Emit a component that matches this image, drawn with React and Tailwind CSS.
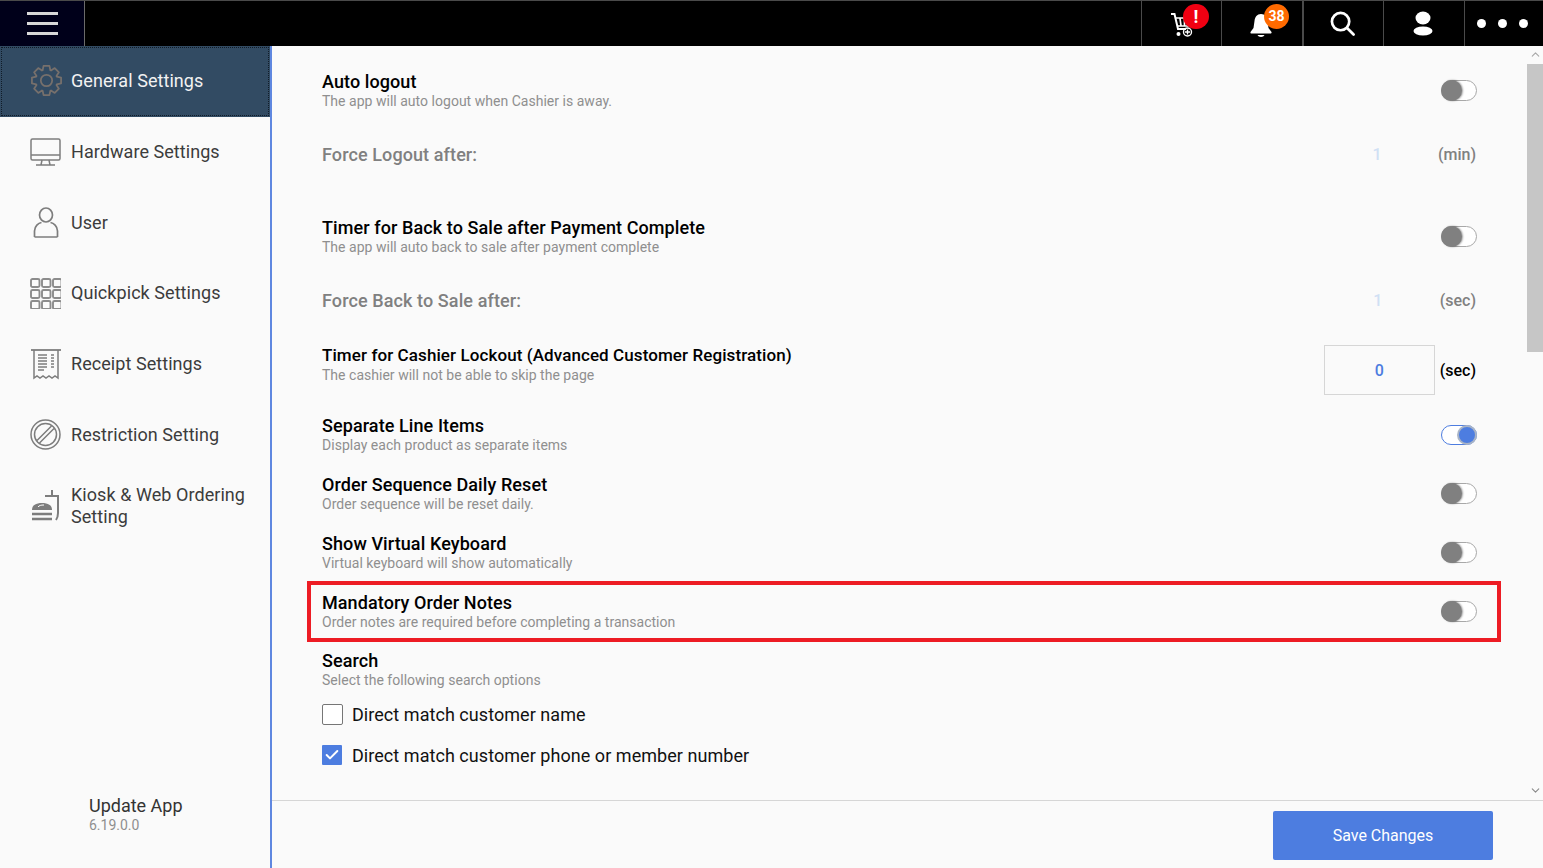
import { ChevronUp, ChevronDown, Check } from 'lucide-react';

const font = { fontFamily: 'Roboto, sans-serif' };

// one outline for the whole cog, teeth computed round the centre
function cogPath() {
  const pts = [];
  for (let i = 0; i < 8; i++) {
    const a = (i * Math.PI) / 4 - Math.PI / 2;
    [[-0.36, 10.6], [-0.2, 14.4], [0.2, 14.4], [0.36, 10.6]].forEach(([da, r]) => {
      pts.push(`${(15 + r * Math.cos(a + da)).toFixed(2)} ${(15 + r * Math.sin(a + da)).toFixed(2)}`);
    });
  }
  return `M${pts.join('L')}Z`;
}

function GearIcon() {
  return (
    <svg width="31" height="31" viewBox="0 0 30 30" fill="none" stroke="#77706c" strokeWidth="1.7" strokeLinejoin="round">
      <path d={cogPath()} />
      <circle cx="15" cy="15" r="5.5" />
    </svg>
  );
}

function MonitorIcon() {
  return (
    <svg width="31" height="28" viewBox="0 0 31 28" fill="none" stroke="#7d7d7d" strokeWidth="1.5">
      <rect x="1" y="1" width="29" height="21" rx="1.5" />
      <path d="M1 17h29M12 22l-1 5M19 22l1 5M6 27h19" />
    </svg>
  );
}

function UserIcon() {
  return (
    <svg width="26" height="31" viewBox="0 0 26 31" fill="none" stroke="#7d7d7d" strokeWidth="1.7">
      <ellipse cx="13" cy="8" rx="6.5" ry="7" />
      <path d="M1.500 30v-6c0-5 4-8 7-8.500M24.500 30v-6c0-5-4-8-7-8.500M1.500 30h23" />
    </svg>
  );
}

function GridIcon() {
  const cells = [];
  for (let r = 0; r < 3; r++) {
    for (let c = 0; c < 3; c++) {
      cells.push(<rect key={`${r}${c}`} x={1 + c * 11} y={1 + r * 11} width="8.500" height="8" rx="1.5" />);
    }
  }
  return (
    <svg width="31" height="31" viewBox="0 0 31 31" fill="none" stroke="#8c8c8c" strokeWidth="1.9">
      {cells}
    </svg>
  );
}

function ReceiptIcon() {
  return (
    <svg width="30" height="31" viewBox="0 0 30 31" fill="none" stroke="#7d7d7d" strokeWidth="1.5">
      <path d="M0 1h30" strokeWidth="1.800" />
      <path d="M3 1v28l3-2 3 2 3-2 3 2 3-2 3 2 3-2 3 2V1" />
      <path d="M7 6h9M7 9h9M7 12h9M7 15h9M7 18h9M7 21h6M20 6h3M20 9h3M20 12h3M20 15h3M20 18h3" strokeWidth="1.500" />
    </svg>
  );
}

function RestrictionIcon() {
  return (
    <svg width="31" height="31" viewBox="0 0 31 31" fill="none" stroke="#7d7d7d" strokeWidth="1.5">
      <circle cx="15.500" cy="15.500" r="14.500" />
      <circle cx="15.500" cy="15.500" r="11" />
      <path d="M7 21.500L21.500 7M9.500 24L24 9.500" />
    </svg>
  );
}

function KioskIcon() {
  return (
    <svg width="29" height="32" viewBox="0 0 29 32" fill="none" stroke="#7d7d7d" strokeWidth="2">
      <path d="M1 20c0-5 4-7 10-7s10 2 10 7z" fill="#7d7d7d" stroke="none" />
      <path d="M7 17c1-1.500 3-2 6-2" stroke="#fff" strokeWidth="1" />
      <path d="M1 24h20M1 29h20" strokeWidth="2.600" />
      <path d="M14 6h14M21 6V0M27 6v17c0 3-.5 5-2 7" />
    </svg>
  );
}

const navItems = [
  { label: 'Hardware Settings', icon: <MonitorIcon />, h: 'h-[70.6px]' },
  { label: 'User', icon: <UserIcon />, h: 'h-[70.6px]' },
  { label: 'Quickpick Settings', icon: <GridIcon />, h: 'h-[70.6px]' },
  { label: 'Receipt Settings', icon: <ReceiptIcon />, h: 'h-[70.6px]' },
  { label: 'Restriction Setting', icon: <RestrictionIcon />, h: 'h-[70.6px]' },
  { label: <>Kiosk &amp; Web Ordering<br />Setting</>, icon: <KioskIcon />, h: 'h-[72.6px]' },
];

function NavIcon({ children }) {
  return <span className="w-[31px] flex justify-center shrink-0">{children}</span>;
}

function Toggle({ on }) {
  if (on) {
    return (
      <div className="w-[36px] h-[20px] rounded-full border border-[#4d7de0] bg-white relative">
        <div className="absolute right-[-1px] top-[-1px] w-[20px] h-[20px] rounded-full bg-[#4d7de0] border-2 border-[#a9b4c6]" />
      </div>
    );
  }
  return (
    <div className="w-[36px] h-[21px] rounded-full border border-[#a8a8a8] bg-white relative">
      <div className="absolute left-[-1px] top-[-1px] w-[21px] h-[21px] rounded-full bg-[#808080] shadow-[1px_0_2px_rgba(0,0,0,0.4)]" />
    </div>
  );
}

function Text({ title, sub, small }) {
  return (
    <div className="flex flex-col mb-[1px]">
      <div className={`${small ? 'text-[17px]' : 'text-[18px]'} leading-[21px] font-medium text-black tracking-[0.09px]`}>{title}</div>
      <div className="text-[14px] leading-[18px] text-[#8f8f8f] tracking-[0.02px]">{sub}</div>
    </div>
  );
}

function Row({ title, sub, children }) {
  return (
    <div className="h-[59px] flex items-center justify-between">
      <Text title={title} sub={sub} />
      {children}
    </div>
  );
}

function Topbar() {
  return (
    <div className="h-[46px] flex bg-black border-t border-[#4a4a4a] shrink-0">
      <div className="w-[85px] bg-[#00001a] border-r border-[#6a6a6a] flex flex-col items-center justify-center gap-[7px]">
        <div className="w-[31px] h-[3px] bg-[#d8d8d8]" />
        <div className="w-[31px] h-[3px] bg-[#d8d8d8]" />
        <div className="w-[31px] h-[3px] bg-[#d8d8d8]" />
      </div>
      <div className="flex-1" />
      <div className="w-[80px] border-l border-[#4a4a4a] relative flex items-center justify-center">
        <svg width="22" height="25" viewBox="0 0 22 25" fill="none" stroke="#fff" strokeWidth="2" className="mr-[-1px] mt-[4px]">
          <path d="M0 1h3.500l3.500 15h8" />
          <path d="M4.500 5H19l-2 8H6.500M9 5.500l1 7M13.500 5.500l0 7" strokeWidth="1.700" />
          <circle cx="7.500" cy="21" r="2" fill="#fff" stroke="none" />
          <circle cx="16.500" cy="19" r="4" strokeWidth="1.400" />
          <path d="M16.500 16.500v5M14 19h5" strokeWidth="1.400" />
        </svg>
        <div className="absolute left-[41px] top-[3px] w-[26px] h-[25px] rounded-full bg-[#f00012] text-white text-[18px] font-bold leading-[25px] text-center">!</div>
      </div>
      <div className="w-[81px] border-l border-[#4a4a4a] relative flex items-center justify-center">
        <svg width="22" height="25" viewBox="0 0 22 25" fill="#fff" className="mr-[3px] mt-[3px]">
          <path d="M11 1c4 0 6 3 6.500 7l1 7 3 4c.3 1-.3 1.500-1 1.500H1.500c-.7 0-1.300-.5-1-1.500l3-4 1-7C5 4 7 1 11 1z" />
          <path d="M7.500 22c1 2.500 6 2.500 7 0z" />
        </svg>
        <div className="absolute left-[42px] top-[3px] w-[25px] h-[25px] rounded-full bg-[#ff6a00] text-white text-[14px] font-bold leading-[25px] text-center">38</div>
      </div>
      <div className="w-[81px] border-l-2 border-[#4a4a4a] flex items-center justify-center pr-[2px]">
        <svg width="25" height="25" viewBox="0 0 26 26" fill="none" stroke="#fff" strokeWidth="2.800" strokeLinecap="round">
          <circle cx="11" cy="11" r="9" />
          <path d="M18 18l6.500 6.500" />
        </svg>
      </div>
      <div className="w-[81px] border-l border-[#4a4a4a] flex items-center justify-center pr-[2px]">
        <svg width="20" height="25" viewBox="0 0 20 25" fill="#fff">
          <ellipse cx="10" cy="7" rx="7.500" ry="6.500" />
          <ellipse cx="10" cy="20" rx="9.500" ry="4.500" />
        </svg>
      </div>
      <div className="w-[79px] border-l border-[#4a4a4a] flex items-center justify-center gap-[12px] pr-[4px]">
        <div className="w-[9px] h-[9px] rounded-full bg-white" />
        <div className="w-[9px] h-[9px] rounded-full bg-white" />
        <div className="w-[9px] h-[9px] rounded-full bg-white" />
      </div>
    </div>
  );
}

function Sidebar() {
  return (
    <div className="w-[272px] shrink-0 bg-[#fafafa] border-r-2 border-[#5f87e0] flex flex-col">
      <div className="h-[71px] bg-[#324b63] p-[1px] shrink-0">
        <div className="h-full border border-dotted border-[#111c28] flex items-center gap-[9px] pl-[29px] pb-[2px] text-[18px] tracking-[0.06px] text-[#f2f2f2]">
          <NavIcon><GearIcon /></NavIcon>
          General Settings
        </div>
      </div>
      {navItems.map((it, i) => (
        <div key={i} className={`${it.h} shrink-0 flex items-center gap-[10px] pl-[30px] text-[18px] leading-[22px] tracking-[0.06px] text-[#3c3c3c]`}>
          <NavIcon>{it.icon}</NavIcon>
          <span>{it.label}</span>
        </div>
      ))}
      <div className="mt-auto pl-[89px] pb-[34px]">
        <div className="text-[18px] leading-[22px] text-[#333] mb-[-1px] relative top-[1px]">Update App</div>
        <div className="text-[14px] leading-[18px] text-[#8f8f8f] mt-[1px]">6.19.0.0</div>
      </div>
    </div>
  );
}

function Scrollbar() {
  return (
    <div className="w-[16px] shrink-0 flex flex-col items-center">
      <ChevronUp size={13} className="text-[#a8a8a8] mt-[2px] mb-[3px]" />
      <div className="w-full h-[288px] bg-[#c6c6c6]" />
      <div className="flex-1" />
      <ChevronDown size={13} className="text-[#8a8a8a] mb-[3px]" />
    </div>
  );
}

export default function App() {
  return (
    <div className="h-[868px] w-[1543px] flex flex-col overflow-hidden bg-[#fafafa]" style={font}>
      <Topbar />
      <div className="flex-1 flex min-h-0">
        <Sidebar />
        <div className="flex-1 flex flex-col min-w-0">
          <div className="flex-1 flex min-h-0">
            <div className="flex-1 pl-[50px] pr-[50px] pt-[15px] overflow-hidden">
              <Row title="Auto logout" sub="The app will auto logout when Cashier is away."><Toggle /></Row>
              <div className="h-[87px] pt-[24px] flex justify-between text-[16px] leading-[22px] text-[#808080]">
                <span className="text-[18px] font-medium tracking-[0.1px]">Force Logout after:</span>
                <div className="flex font-medium">
                  <span className="text-[#d0e0f4] w-[10px] text-center mr-[56px]">1</span>
                  <span className="mr-[1px]">(min)</span>
                </div>
              </div>
              <Row title="Timer for Back to Sale after Payment Complete" sub="The app will auto back to sale after payment complete"><Toggle /></Row>
              <div className="h-[69px] pt-[24px] flex justify-between text-[16px] leading-[22px] text-[#808080]">
                <span className="text-[18px] font-medium tracking-[0.1px]">Force Back to Sale after:</span>
                <div className="flex font-medium">
                  <span className="text-[#d0e0f4] w-[10px] text-center mr-[57px]">1</span>
                  <span className="mr-[1px]">(sec)</span>
                </div>
              </div>
              <div className="h-[70px] flex items-center justify-between">
                <div className="mb-[10px]">
                  <Text small title="Timer for Cashier Lockout (Advanced Customer Registration)" sub="The cashier will not be able to skip the page" />
                </div>
                <div className="flex items-center gap-[5px] mr-[1px]">
                  <div className="w-[111px] h-[50px] border border-[#d6d6d6] flex items-center justify-center pt-[1px] text-[16px] font-medium text-[#4d7de0]">0</div>
                  <span className="text-[16px] font-medium text-black pt-[1px]">(sec)</span>
                </div>
              </div>
              <Row title="Separate Line Items" sub="Display each product as separate items"><Toggle on /></Row>
              <Row title="Order Sequence Daily Reset" sub="Order sequence will be reset daily."><Toggle /></Row>
              <Row title="Show Virtual Keyboard" sub="Virtual keyboard will show automatically"><Toggle /></Row>
              <div className="h-[61px] mt-[-1px] ml-[-15px] mr-[-24px] pl-[11px] pr-[20px] border-4 border-[#ed1c24] flex items-center justify-between">
                <Text title="Mandatory Order Notes" sub="Order notes are required before completing a transaction" />
                <Toggle />
              </div>
              <div className="pt-[8px]">
                <Text title="Search" sub="Select the following search options" />
              </div>
              <label className="flex items-center gap-[9px] mt-[14px] h-[22px] text-[18px] tracking-[0.05px] text-[#111]">
                <span className="w-[21px] h-[21px] border border-[#767676] rounded-[2px] bg-white" />
                Direct match customer name
              </label>
              <label className="flex items-center gap-[10px] mt-[19px] h-[22px] text-[18px] tracking-[0.05px] text-[#111]">
                <span className="w-[20px] h-[20px] bg-[#4d7de0] flex items-center justify-center rounded-[1px]">
                  <Check size={16} strokeWidth={3} className="text-white" />
                </span>
                Direct match customer phone or member number
              </label>
            </div>
            <Scrollbar />
          </div>
          <div className="h-[68px] shrink-0 border-t border-[#d6d6d6] flex items-start justify-end pr-[50px] pt-[10px]">
            <button className="w-[220px] h-[49px] rounded-[2px] bg-[#4d7de0] text-white text-[16px] pt-[1px]">Save Changes</button>
          </div>
        </div>
      </div>
    </div>
  );
}
